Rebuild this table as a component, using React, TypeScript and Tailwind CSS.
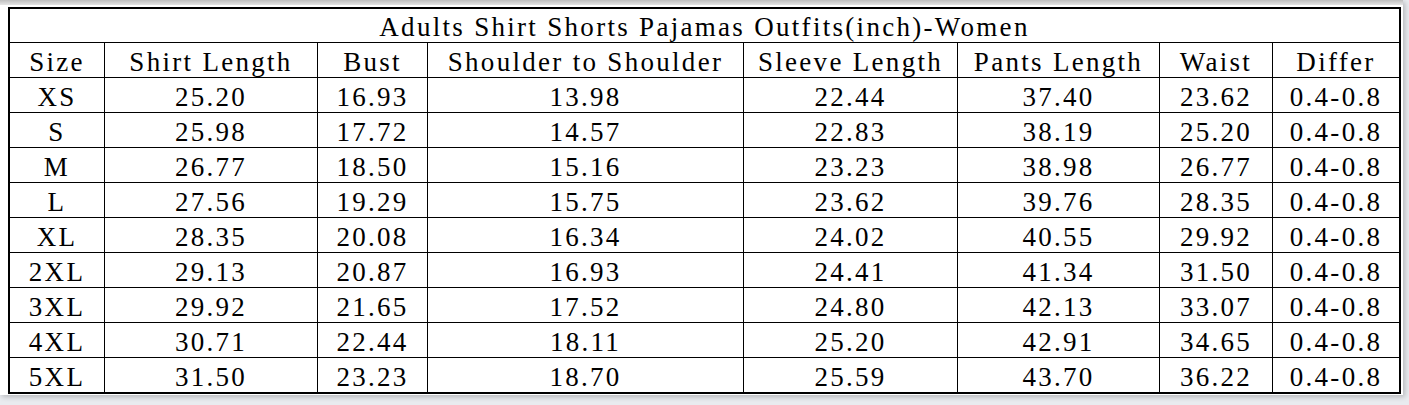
const headers = ["Size", "Shirt Length", "Bust", "Shoulder to Shoulder", "Sleeve Length", "Pants Length", "Waist", "Differ"];

const rows = [
  ["XS", "25.20", "16.93", "13.98", "22.44", "37.40", "23.62", "0.4-0.8"],
  ["S", "25.98", "17.72", "14.57", "22.83", "38.19", "25.20", "0.4-0.8"],
  ["M", "26.77", "18.50", "15.16", "23.23", "38.98", "26.77", "0.4-0.8"],
  ["L", "27.56", "19.29", "15.75", "23.62", "39.76", "28.35", "0.4-0.8"],
  ["XL", "28.35", "20.08", "16.34", "24.02", "40.55", "29.92", "0.4-0.8"],
  ["2XL", "29.13", "20.87", "16.93", "24.41", "41.34", "31.50", "0.4-0.8"],
  ["3XL", "29.92", "21.65", "17.52", "24.80", "42.13", "33.07", "0.4-0.8"],
  ["4XL", "30.71", "22.44", "18.11", "25.20", "42.91", "34.65", "0.4-0.8"],
  ["5XL", "31.50", "23.23", "18.70", "25.59", "43.70", "36.22", "0.4-0.8"],
];

function Cell({ children, span }: { children: React.ReactNode; span?: boolean }) {
  return (
    <div
      className={
        "bg-white flex items-center justify-center pt-[4px] whitespace-pre " +
        (span ? "col-span-8" : "")
      }
    >
      {children}
    </div>
  );
}

export default function App() {
  return (
    <div className="w-[1409px] h-[405px] bg-[#e9ebef] overflow-hidden">
      <div className="w-[1403px] h-[395px] bg-white flex flex-col shadow-[2px_2px_5px_rgba(0,0,0,0.22)]">
        <div className="h-[5px] bg-gradient-to-b from-[#bfbfbf] to-[#e6e6e6]" />
        <div className="pl-[8px] pt-[2px]">
          <div
            className="grid grid-cols-[94px_212px_109px_315px_213px_201px_112px_126px] grid-rows-[33px_repeat(10,34px)] gap-px bg-black border-2 border-black w-fit text-black text-[27px] tracking-[2.3px] leading-none"
            style={{ fontFamily: '"Liberation Serif", "DejaVu Serif", serif' }}
          >
            <Cell span>Adults Shirt Shorts Pajamas Outfits(inch)-Women</Cell>
            {headers.map((h) => (
              <Cell key={h}>{h}</Cell>
            ))}
            {rows.map((r) =>
              r.map((v, i) => <Cell key={r[0] + i}>{v}</Cell>)
            )}
          </div>
        </div>
      </div>
    </div>
  );
}
